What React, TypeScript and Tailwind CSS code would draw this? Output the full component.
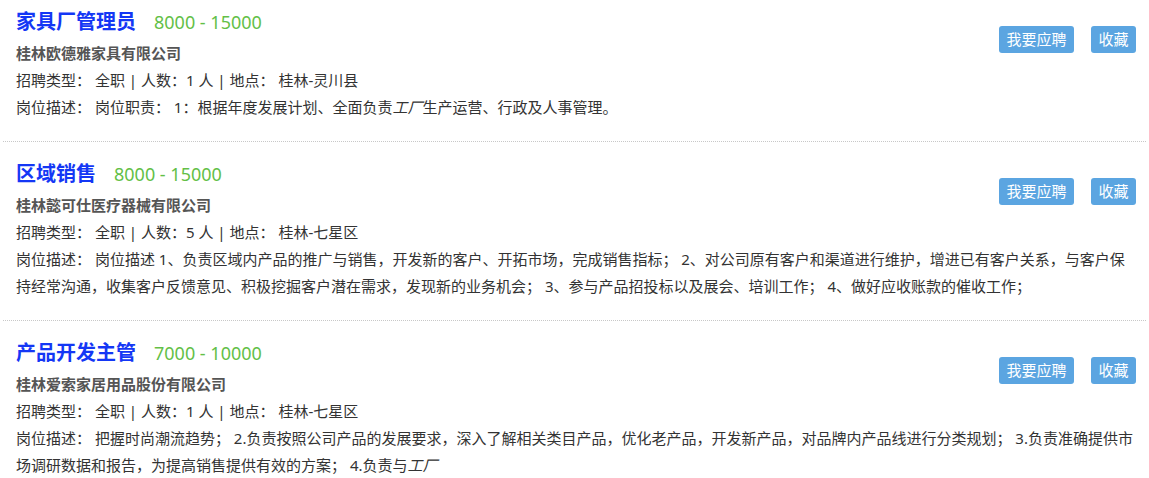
import type { ReactNode } from "react";

type Job = {
  title: string;
  salary: string;
  company: string;
  count: number;
  place: string;
  desc: ReactNode;
};

const jobs: Job[] = [
  {
    title: "家具厂管理员",
    salary: "8000 - 15000",
    company: "桂林欧德雅家具有限公司",
    count: 1,
    place: "桂林-灵川县",
    desc: (
      <>
        岗位职责： 1：根据年度发展计划、全面负责<i>工厂</i>生产运营、行政及人事管理。
      </>
    ),
  },
  {
    title: "区域销售",
    salary: "8000 - 15000",
    company: "桂林懿可仕医疗器械有限公司",
    count: 5,
    place: "桂林-七星区",
    desc: "岗位描述 1、负责区域内产品的推广与销售，开发新的客户、开拓市场，完成销售指标； 2、对公司原有客户和渠道进行维护，增进已有客户关系，与客户保持经常沟通，收集客户反馈意见、积极挖掘客户潜在需求，发现新的业务机会； 3、参与产品招投标以及展会、培训工作； 4、做好应收账款的催收工作；",
  },
  {
    title: "产品开发主管",
    salary: "7000 - 10000",
    company: "桂林爱索家居用品股份有限公司",
    count: 1,
    place: "桂林-七星区",
    desc: (
      <>
        把握时尚潮流趋势； 2.负责按照公司产品的发展要求，深入了解相关类目产品，优化老产品，开发新产品，对品牌内产品线进行分类规划； 3.负责准确提供市场调研数据和报告，为提高销售提供有效的方案； 4.负责与<i>工厂</i>
      </>
    ),
  },
];

function JobCard({ job }: { job: Job }) {
  return (
    <div className="mx-[3px] border-b border-dotted border-[#c8c8c8] pl-[13px] pr-[10px] pt-[14px] pb-[20px] first:pt-[4px]">
      <div className="flex items-start justify-between">
        <div>
          <div className="flex items-baseline leading-[36px]">
            <span className="text-[20px] font-bold text-[#1437f5]">{job.title}</span>
            <span className="ml-[18px] text-[18px] text-[#63bf47]">{job.salary}</span>
          </div>
          <div className="text-[15px] font-bold leading-[26px] text-[#555]">{job.company}</div>
          <div className="text-[15px] leading-[28px] text-[#333]">
            招聘类型： 全职 | 人数：{job.count} 人 | 地点： {job.place}
          </div>
        </div>
        <div className="mt-[22px] flex gap-[17px]">
          <button className="h-[27px] w-[75px] rounded-[3px] bg-[#5ba5e1] text-[15px] text-white">
            我要应聘
          </button>
          <button className="h-[27px] w-[45px] rounded-[3px] bg-[#5ba5e1] text-[15px] text-white">
            收藏
          </button>
        </div>
      </div>
      <p className="text-[15px] leading-[27px] text-[#333]">
        岗位描述： {job.desc}
      </p>
    </div>
  );
}

export default function App() {
  return (
    <div
      className="h-[478px] w-[1149px] overflow-hidden bg-white"
      style={{ fontFamily: '"Noto Sans", "Noto Sans CJK SC", sans-serif' }}
    >
      {jobs.map((job) => (
        <JobCard key={job.title} job={job} />
      ))}
    </div>
  );
}
